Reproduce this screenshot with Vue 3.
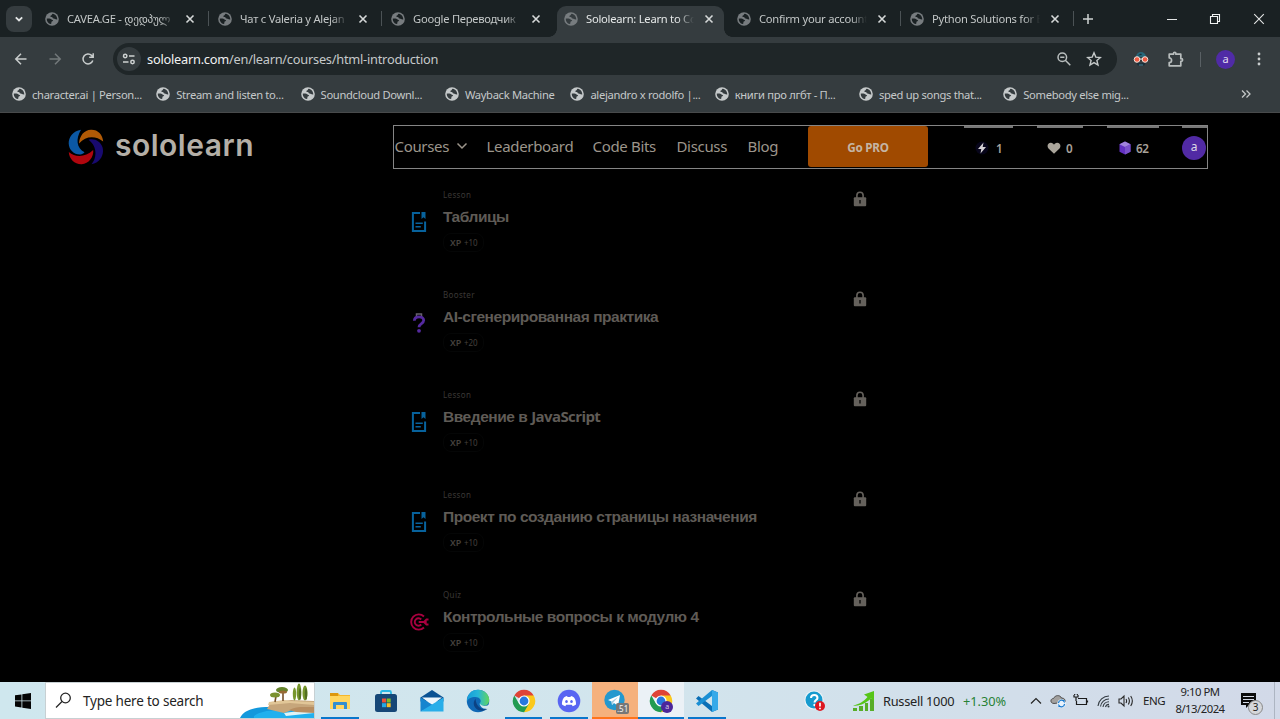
<script setup>
const tabs = [
  { title: 'CAVEA.GE - დედპულ' },
  { title: 'Чат с Valeria y Alejan' },
  { title: 'Google Переводчик' },
  { title: 'Sololearn: Learn to Co', active: true },
  { title: 'Confirm your account' },
  { title: 'Python Solutions for B' }
]

const bookmarks = [
  { title: 'character.ai | Person...' },
  { title: 'Stream and listen to...' },
  { title: 'Soundcloud Downl...' },
  { title: 'Wayback Machine', short: true },
  { title: 'alejandro x rodolfo |...' },
  { title: 'книги про лгбт - П...' },
  { title: 'sped up songs that...' },
  { title: 'Somebody else mig...' }
]

const links = ['Leaderboard', 'Code Bits', 'Discuss', 'Blog']

const lessons = [
  { kind: 'Lesson', title: 'Таблицы', xp: '+10' },
  { kind: 'Booster', title: 'AI-сгенерированная практика', xp: '+20' },
  { kind: 'Lesson', title: 'Введение в ', latin: 'JavaScript', xp: '+10' },
  { kind: 'Lesson', title: 'Проект по созданию страницы назначения', xp: '+10' },
  { kind: 'Quiz', title: 'Контрольные вопросы к модулю 4', xp: '+10' }
]
</script>

<template>
  <div class="screen">
    <svg class="defs" width="0" height="0">
      <symbol id="globe" viewBox="0 0 14 14">
        <circle cx="7" cy="7" r="6.8" fill="currentColor" />
        <path d="M7.8 1.700c-1.300.2-.4 1.400-1.700 1.700-1.300.2-.7 1.600.6 1.700 1.300 0 .5 1.400 1.900 1.500 1.500 0 1.200 1 3.700.9C12.300 4.600 10.500 2 7.800 1.700zM1.700 6.700c1.500-.3 4-.3 4.800.7.500.700 1.500.400 1.600 1.200.1.900-1.600.700-1.700 1.600-.1.900.2 1.500-.9 1.900C3.400 11.500 1.700 9.600 1.700 6.700z" fill="var(--hole)" />
      </symbol>
    </svg>

    <header class="browser">
      <div class="tabstrip">
        <button class="tabsearch">
          <svg width="10" height="10" viewBox="0 0 10 10"><path d="M1.800 3.300l3.200 3.200 3.200-3.200" fill="none" stroke="#e2e5e5" stroke-width="1.800" /></svg>
        </button>
        <div v-for="tab in tabs" :key="tab.title" class="tab" :class="{ active: tab.active }">
          <svg class="tabicon" width="14" height="14"><use href="#globe" /></svg>
          <span class="tabtitle">{{ tab.title }}</span>
          <svg class="close" width="10" height="10" viewBox="0 0 10 10"><path d="M1.500 1.500l7 7m0-7l-7 7" stroke="currentColor" stroke-width="1.600" /></svg>
        </div>
        <svg class="plus" width="12" height="12" viewBox="0 0 12 12"><path d="M6 1v10M1 6h10" stroke="#cfd3d3" stroke-width="1.500" /></svg>
        <div class="windowbuttons">
          <svg width="12" height="12" viewBox="0 0 12 12"><path d="M1 6.500h10" stroke="#e4e6e6" /></svg>
          <svg width="12" height="12" viewBox="0 0 12 12"><path d="M1.500 3.500h7v7h-7zM3.500 3.500v-2h7v7h-2" fill="none" stroke="#f0f2f2" stroke-width="1.100" /></svg>
          <svg width="12" height="12" viewBox="0 0 12 12"><path d="M1.200 1.200l9.600 9.600m0-9.600l-9.600 9.600" stroke="#e4e6e6" stroke-width="1.100" /></svg>
        </div>
      </div>

      <div class="toolbar">
        <svg class="navicon" width="14" height="14" viewBox="0 0 14 14"><path d="M12.500 7H2M7 1.800L1.800 7 7 12.200" fill="none" stroke="#c9cdcd" stroke-width="1.500" /></svg>
        <svg class="navicon" width="14" height="14" viewBox="0 0 14 14"><path d="M1.500 7H12M7 1.800L12.200 7 7 12.200" fill="none" stroke="#73797b" stroke-width="1.500" /></svg>
        <svg class="navicon" width="14" height="14" viewBox="0 0 14 14"><path d="M11.800 8.500A5 5 0 1 1 10.600 3.400L12 4.900M12.200 1.200v4H8.200" fill="none" stroke="#c9cdcd" stroke-width="1.500" /></svg>
        <div class="omnibox">
          <span class="site">
            <svg width="14" height="14" viewBox="0 0 14 14" fill="none" stroke="#ced2d2" stroke-width="1.500"><circle cx="3.200" cy="4" r="1.700" /><path d="M7 4h5.500M1 10h5.500" /><circle cx="10.500" cy="10" r="1.700" /></svg>
          </span>
          <span class="url"><b>sololearn.com</b>/en/learn/courses/html-introduction</span>
          <svg class="zoomicon" width="14" height="14" viewBox="0 0 14 14"><g fill="none" stroke="#b9bebe" stroke-width="1.500"><circle cx="5.300" cy="5.300" r="4.300" /><path d="M8.300 8.300l5 5M3.200 5.300h4.200" /></g></svg>
          <svg width="16" height="16" viewBox="0 0 16 16"><path d="M8 1.800l1.800 4.300 4.600.4-3.500 3 1.100 4.600L8 11.600l-4 2.500 1.100-4.600-3.500-3 4.600-.4z" fill="none" stroke="#c5c9c9" stroke-width="1.400" /></svg>
        </div>
        <svg class="mask" width="16" height="16" viewBox="0 0 16 16"><path d="M3 6a5 5 0 0 1 10 0z" fill="#27687a" /><path d="M4.500 4.500L8 2.500l1 1.500z" fill="#182f3a" /><circle cx="4" cy="8.500" r="2.800" fill="#f05b42" stroke="#f4e4de" stroke-width="1" /><circle cx="12" cy="8.500" r="2.800" fill="#f05b42" stroke="#f4e4de" stroke-width="1" /><path d="M6 8h4" stroke="#f4e4de" /><path d="M3.500 12.500c1.500-1.200 3-.5 4.500 0 1.500-.5 3-1.200 4.500 0l-1.300 2H4.800z" fill="#182f3a" /><path d="M6 14h4" stroke="#477c90" /></svg>
        <svg class="puzzle" width="17" height="17" viewBox="0 0 17 17"><path d="M2.200 3.200h4.300v-.7a1.200 1.200 0 0 1 2.400 0v.7h4.900v4.500h.5a1.300 1.300 0 0 1 0 2.600h-.5v4.500H2.200v-3.300a2.300 2.300 0 0 0 0-4.700z" fill="none" stroke="#b8bdbd" stroke-width="1.700" stroke-linejoin="round" /></svg>
        <span class="sep"></span>
        <span class="profile">a</span>
        <svg class="dots" width="4" height="16" viewBox="0 0 4 16" fill="#c9cdcd"><circle cx="2" cy="3" r="1.400" /><circle cx="2" cy="8" r="1.400" /><circle cx="2" cy="13" r="1.400" /></svg>
      </div>

      <div class="bookmarks">
        <div v-for="mark in bookmarks" :key="mark.title" class="mark" :class="{ short: mark.short }">
          <svg width="14" height="14"><use href="#globe" /></svg>
          <span>{{ mark.title }}</span>
        </div>
        <svg class="more" width="10" height="10" viewBox="0 0 10 10"><path d="M1 1.500L4.500 5 1 8.500M5.500 1.500L9 5 5.500 8.500" fill="none" stroke="#c3c7c7" stroke-width="1.300" /></svg>
      </div>
    </header>

    <main class="page">
      <div class="siteheader">
        <div class="brand">
          <svg width="36" height="36" viewBox="0 0 36 36">
            <path d="M13 .8C5 2 .5 8.500.7 14.500 1 21 6 25.800 12.500 25.500c1.400-.2 2.800-.8 4-2.200C8.500 19 7.500 10 13 .8z" fill="#0b58a4" />
            <path d="M11 14.500C11.500 7 16 1 23 .8 30 .6 34.500 5.500 35.200 12.500 28 6.800 18 6.300 11 14.500z" fill="#b15a06" />
            <path d="M20.500 10.800c6-1.800 12 1.500 14 7.500 2 7-2 15-11 16.900 5.500-6 6-18-3-24.400z" fill="#180a70" />
            <path d="M.8 23C7.500 28.500 17 28.500 25.200 21c.9 7-4.700 13.800-11.400 14.200C6.800 35.500 1 30 .8 23z" fill="#b0060e" />
          </svg>
          <span class="wordmark">sololearn</span>
        </div>
        <nav class="nav">
          <a class="courses">Courses <svg width="12" height="8" viewBox="0 0 12 8"><path d="M1.500 1.500L6 6l4.500-4.500" fill="none" stroke="#9c958b" stroke-width="1.500" /></svg></a>
          <a v-for="link in links" :key="link" :class="link.toLowerCase().replace(' ', '-')">{{ link }}</a>
          <button class="pro">Go PRO</button>
          <div class="stat bolt">
            <svg width="14" height="14" viewBox="0 0 14 14"><circle cx="7" cy="7" r="6.500" fill="#07051a" /><path d="M8.500 1.500L3 8h3.300L5.500 12.500 11 6H7.700z" fill="#d4d0d4" /></svg><span>1</span>
          </div>
          <div class="stat heart">
            <svg width="14" height="12" viewBox="0 0 14 12"><path d="M7 11.800L1.500 6.500C-.4 4.400.7.700 3.900.7 5.500.7 6.500 1.700 7 2.700 7.500 1.700 8.500.7 10.100.7c3.200 0 4.300 3.700 2.400 5.800z" fill="#aaa59b" /></svg><span>0</span>
          </div>
          <div class="stat cube">
            <svg width="14" height="14" viewBox="0 0 14 14"><path d="M7 .5l5.500 2.700v7.600L7 13.500l-5.500-2.700V3.200z" fill="#6230c0" /><path d="M1.500 3.200L7 .5l5.500 2.700L7 5.900z" fill="#a183db" /><path d="M7 5.900l5.500-2.700v7.600L7 13.500z" fill="#7a51ca" /></svg><span>62</span>
          </div>
          <div class="account"><span>a</span></div>
        </nav>
      </div>

      <section class="lessons">
        <article v-for="lesson in lessons" :key="lesson.title" class="lesson">
          <div class="lessonicon" :class="lesson.kind.toLowerCase()">
            <svg v-if="lesson.kind === 'Lesson'" width="16" height="22" viewBox="0 0 16 22"><path d="M9 1.900H1.900v18.200h12.200V10.500" fill="none" stroke="#07629c" stroke-width="2" /><path d="M10.500 1h4v7l-2-1.800-2 1.800z" fill="#07629c" /><path d="M4.500 12.300h7.300M4.500 15.800h5.300" stroke="#07629c" stroke-width="1.500" /></svg>
            <svg v-else-if="lesson.kind === 'Booster'" width="16" height="22" viewBox="0 0 16 22"><path d="M5.500 5V2h5v3" fill="none" stroke="#68626f" stroke-width="1.500" /><path d="M3.300 8.800c.2-5.300 9.400-5.100 9.400-.5 0 3.500-4.700 3-4.700 7" fill="none" stroke="#552a9f" stroke-width="2.800" /><circle cx="8" cy="18.800" r="1.900" fill="#552a9f" /></svg>
            <svg v-else width="20" height="20" viewBox="0 0 20 20"><g fill="none" stroke="#a9003f" stroke-width="1.900"><path d="M15 4.500a7.600 7.600 0 1 0 0 11" /><path d="M12.200 7.500a3.700 3.700 0 1 0 0 5M9.700 10h8M15 10l2.500-2.500h2M15 10l2.500 2.500h2" /></g></svg>
          </div>
          <div class="lessontext">
            <span class="kind">{{ lesson.kind }}</span>
            <h3>{{ lesson.title }}<span v-if="lesson.latin" class="latin">{{ lesson.latin }}</span></h3>
            <span class="xp"><b>XP</b><span>{{ lesson.xp }}</span></span>
          </div>
          <svg class="lock" width="14" height="16" viewBox="0 0 14 16"><path d="M3.900 7V4.300a3.100 3.100 0 0 1 6.200 0V7" fill="none" stroke="#65615c" stroke-width="1.600" /><rect x=".8" y="6.300" width="12.400" height="8.900" rx="1" fill="#65615c" /><path d="M7 9v3.500" stroke="#171615" stroke-width="1.600" /></svg>
        </article>
      </section>
    </main>

    <footer class="taskbar">
      <div class="start">
        <svg width="16" height="16" viewBox="0 0 16 16"><path d="M0 2.300L6.500 1.400v6.100H0zM7.300 1.300L16 0v7.500H7.300zM0 8.300h6.500v6.200L0 13.600zM7.300 8.300H16V16l-8.700-1.300z" fill="#050505" /></svg>
      </div>
      <div class="search">
        <svg class="lens" width="17" height="17" viewBox="0 0 17 17"><circle cx="10.500" cy="6" r="4.800" fill="none" stroke="#252525" stroke-width="1.300" /><path d="M7 9.500L1 15.500" stroke="#252525" stroke-width="1.300" /></svg>
        <span>Type here to search</span>
        <svg class="scene" width="74" height="36" viewBox="0 0 74 36">
          <path d="M0 36c4-8 14-11 30-11h44v11z" fill="#1398dc" /><path d="M14 34c8-6 20-6 32-5l28 2v5H14z" fill="#20b0ee" /><path d="M44 31l30-4v4l-28 3z" fill="#dff4f6" />
          <path d="M27 27l4-7 12-1 8-1 23 1v10l-14 1-8-2-8 3z" fill="#c6a67b" /><path d="M29 20l15-2 8 1 22 1v3l-24-2-22 2z" fill="#e1c697" /><path d="M49 28c7-4 15-3 25-3v6l-18-1z" fill="#b78e62" />
          <path d="M35 20l1-6M43 19V9" stroke="#76502b" stroke-width="1.600" /><ellipse cx="35" cy="13" rx="5" ry="2.500" fill="#7b9130" /><ellipse cx="42" cy="8" rx="6" ry="3" fill="#63832b" /><ellipse cx="43" cy="10" rx="4" ry="1.500" fill="#986b35" />
          <g fill="#77972d"><ellipse cx="54.500" cy="12" rx="1.700" ry="6.500" /><ellipse cx="59" cy="10" rx="2.300" ry="8.500" /><ellipse cx="65" cy="11" rx="2.500" ry="7.500" /></g><g fill="#526f21"><ellipse cx="60" cy="12" rx="1.200" ry="6" /><ellipse cx="66" cy="12" rx="1.200" ry="6" /></g>
        </svg>
      </div>
      <div class="apps">
        <div class="app running explorer">
          <svg width="22" height="22" viewBox="0 0 22 22"><path d="M1 3h8l2 2h10v13H1z" fill="#f5b72d" /><path d="M1 3h8v3H1z" fill="#dc970d" /><path d="M1 6h20v13H1z" fill="#ffd65f" /><path d="M4 19v-6q0-1 1-1h12q1 0 1 1v6h-3v-4H7v4z" fill="#318fcf" /></svg>
        </div>
        <div class="app">
          <svg width="24" height="24" viewBox="0 0 24 24"><path d="M7 8V3.500Q7 2 8.500 2h7Q17 2 17 3.500V8" fill="none" stroke="#29b8e6" stroke-width="1.800" /><rect x="1" y="5" width="22" height="18" rx="2.500" fill="#164777" /><path d="M8 9.500h4v4H8z" fill="#ef5138" /><path d="M12.700 9.500h4v4h-4z" fill="#7fbe27" /><path d="M8 14.200h4v4H8z" fill="#25a9e5" /><path d="M12.700 14.200h4v4h-4z" fill="#f9be25" /></svg>
        </div>
        <div class="app">
          <svg width="24" height="24" viewBox="0 0 24 24"><path d="M.5 8.500L12 1l11.500 7.500v4H.5z" fill="#0a5293" /><path d="M2 8.500h20L12 16z" fill="#edf6fc" /><path d="M.5 8.500l14 8.500L.5 22.500z" fill="#1685cf" /><path d="M23.500 8.500v14H.5z" fill="#28aee9" /></svg>
        </div>
        <div class="app">
          <svg width="24" height="24" viewBox="0 0 24 24"><defs><linearGradient id="edge"><stop stop-color="#159dda" /><stop offset=".5" stop-color="#27b5d8" /><stop offset="1" stop-color="#62d65c" /></linearGradient></defs><circle cx="12" cy="12" r="11.200" fill="#1068b5" /><path d="M1 10C2.500 4 6.500.8 12 .8c7 0 11.200 5.500 11.200 10 0 5-4 7-8 5.600-1.700-.6-2-1.400-1.200-2.500 2.200-3-1-6-4.500-6C5 8 1.500 9.500 1 13z" fill="url(#edge)" /><path d="M9.500 9.700c-3.500 4.300-1.500 9.500 3.500 11.600 3.500 1.100 6.500.2 8.700-1.500-4 1.400-11.400-.4-12.200-10.100z" fill="#0c4283" /><path d="M13.500 14.500c2.400 3 7 3.200 10.500.5v2.500l-2 2c-3.800 1.200-7.500-.5-8.500-5z" fill="#d4e7ee" /></svg>
        </div>
        <div class="app running">
          <svg width="24" height="24" viewBox="0 0 24 24"><path d="M12 12L2.300 6.400A11.200 11.200 0 0 1 21.700 6.400z" fill="#df4437" /><path d="M12 12V6.400h9.700A11.200 11.200 0 0 1 12 23.200z" fill="#fbc91c" /><path d="M2.300 6.400L7.200 14.900l9.700-.1L12 23.200A11.200 11.200 0 0 1 2.300 6.400z" fill="#229b51" /><circle cx="12" cy="12" r="5.600" fill="#fff" /><circle cx="12" cy="12" r="4.400" fill="#2878de" /></svg>
        </div>
        <div class="app running">
          <svg width="24" height="24" viewBox="0 0 24 24"><circle cx="12" cy="12" r="11.300" fill="#5865f2" /><path d="M8.500 7.500L10 7l.6 1.100h2.800L14 7l1.500.5c2.200.8 3.800 4.500 3.500 8-1.100.9-2.100 1.400-3.300 1.700l-.9-1.500H9.200l-.9 1.500c-1.200-.3-2.200-.8-3.300-1.700-.3-3.500 1.300-7.200 3.500-8z" fill="#fff" /><ellipse cx="9.500" cy="12.500" rx="1.300" ry="1.500" fill="#5865f2" /><ellipse cx="14.500" cy="12.500" rx="1.300" ry="1.500" fill="#5865f2" /></svg>
        </div>
        <div class="app telegram">
          <svg width="24" height="24" viewBox="0 0 24 24"><circle cx="11.500" cy="11" r="10.200" fill="#2498ce" /><path d="M5 11l12-5-2 11-4-3-2 2-.5-3.500z" fill="#fff" /><path d="M8.500 12.500L15 8l-4.700 5.500L9 16z" fill="#a8cce0" /></svg>
          <span class="badge">.51</span>
        </div>
        <div class="app running current">
          <svg width="24" height="24" viewBox="0 0 24 24"><path d="M12 12L2.300 6.400A11.200 11.200 0 0 1 21.700 6.400z" fill="#df4437" /><path d="M12 12V6.400h9.700A11.200 11.200 0 0 1 12 23.200z" fill="#fbc91c" /><path d="M2.300 6.400L7.200 14.900l9.700-.1L12 23.200A11.200 11.200 0 0 1 2.300 6.400z" fill="#229b51" /><circle cx="12" cy="12" r="5.600" fill="#fff" /><circle cx="12" cy="12" r="4.400" fill="#2878de" /></svg>
          <span class="profilebadge">a</span>
        </div>
        <div class="app running">
          <svg width="24" height="24" viewBox="0 0 24 24"><path d="M17 1l6 2.500v17L17 23 1 9.500 3.500 7 17 17z" fill="#0b6fb6" /><path d="M17 1L1 14.500 3.500 17 17 7z" fill="#198fd4" /><path d="M17 1l6 2.500v17L17 23z" fill="#36a9e9" /></svg>
        </div>
      </div>
      <div class="tray">
        <svg class="help" width="22" height="22" viewBox="0 0 22 22"><circle cx="10" cy="10" r="9.600" fill="#eef5f8" /><circle cx="10" cy="10" r="8.500" fill="#169bcf" /><path d="M7 8c0-4 6.500-4 6.500 0 0 2-3 2.200-3 4.500" fill="none" stroke="#fff" stroke-width="2" /><circle cx="10.500" cy="15" r="1.200" fill="#fff" /><circle cx="16" cy="16" r="5" fill="#dd1821" /><path d="M16 12.800v3.700m0 1.200v1.500" stroke="#fff" stroke-width="1.700" /></svg>
        <svg class="chart" width="23" height="22" viewBox="0 0 23 22"><path d="M1 21v-3h4v3zM7 21v-5h4v5zM13 21v-8h3v8zM18 21V9h4v12z" fill="#57ad28" /><path d="M1 15.500c6-1 11-4.500 14.500-8.500L12 4.500 22 1v10l-3-2.500C14 13 8 16.500 1 15.500z" fill="#56c518" /></svg>
        <span class="stock">Russell 1000</span><span class="gain">+1.30%</span>
        <svg class="caret" width="12" height="8" viewBox="0 0 12 8"><path d="M1 6.500l5-5 5 5" fill="none" stroke="#252525" stroke-width="1.200" /></svg>
        <svg class="cloud" width="16" height="14" viewBox="0 0 16 14"><path d="M4 9.500C0 9.500 0 4.500 3.500 4.500 5 1 10 .5 11.500 4c3 0 4 2 3.500 4z" fill="#a2a09e" stroke="#4f4e4f" /><circle cx="11.500" cy="9.500" r="4.300" fill="#e8f2fc" /><path d="M8.500 9a3 3 0 0 1 5.500-1.500V6M14.500 10A3 3 0 0 1 9 11.500V13" fill="none" stroke="#1377cd" stroke-width="1.200" /></svg>
        <svg class="battery" width="16" height="14" viewBox="0 0 16 14"><path d="M5 4.500h8.500v6H3.500V7M14.500 6.500v2M1 1v2h4V1M3 3v4M1.700 0v1M4.300 0v1" fill="none" stroke="#1c1c1c" stroke-width="1.200" /></svg>
        <svg class="wifi" width="14" height="14" viewBox="0 0 14 14"><g fill="none" stroke="#333b42" stroke-width="1.100"><path d="M1 12A11 11 0 0 1 12 2M3.500 12.500A8.500 8.500 0 0 1 12 5M6 13a6 6 0 0 1 6-5.200M8.500 13a3.500 3.500 0 0 1 3.500-2.600" /></g><circle cx="11.500" cy="12.500" r="1" fill="#333b42" /></svg>
        <svg class="speaker" width="16" height="14" viewBox="0 0 16 14"><g fill="none" stroke="#292929" stroke-width="1.100"><path d="M1 5h2l3-3v10L3 9H1zM8 5q1.200 2 0 4M10.300 3.500q2.200 3.500 0 7M12.700 2q3.300 5 0 10" /></g></svg>
        <span class="language">ENG</span>
        <div class="clock"><span>9:10 PM</span><span>8/13/2024</span></div>
        <div class="notice"><svg width="15" height="16" viewBox="0 0 15 16"><path d="M0 0h15v12H8l-3 3v-3H0z" fill="#0b0b0b" /><path d="M2 3.500h11M2 6.500h11M2 9.500h6" stroke="#d5dae6" stroke-width="1.100" /></svg><span>3</span></div>
        <span class="peek"></span>
      </div>
    </footer>
  </div>
</template>

<style>
body { overflow: hidden; background: #000; }
</style>

<style scoped>
* { box-sizing: border-box; }
svg { display: block; flex-shrink: 0; }
button { border: 0; padding: 0; }
.screen { width: 1280px; height: 719px; display: flex; flex-direction: column; overflow: hidden; background: #000; font-family: "Noto Sans", "DejaVu Sans", sans-serif; }
.defs { height: 0; }
.browser { height: 113px; flex-shrink: 0; background: #353c3f; border-bottom: 1px solid #484a4b; white-space: nowrap; }
.tabstrip { height: 38px; display: flex; align-items: center; background: linear-gradient(#1a2123 0 37px, #353c3f 37px); }
.tabsearch { width: 26px; height: 26px; margin: 0 8.500px 0 5.500px; display: grid; place-items: center; background: #353c3f; border-radius: 8px; }
.tab { --hole: #1a2123; position: relative; width: 173px; flex-shrink: 0; height: 38px; padding-left: 5px; display: flex; align-items: center; color: #c3c7c7; }
.tab:not(.active)::after { content: ""; position: absolute; left: 167.500px; top: 11px; width: 1px; height: 15px; background: #4b5255; }
.tab:nth-child(4)::after { display: none; }
.tabicon { color: #777c7f; }
.tabtitle { width: 108px; margin-left: 8px; font-size: 11.200px; line-height: 20px; letter-spacing: -.25px; mask-image: linear-gradient(90deg, #000 85%, transparent); }
.close { margin-left: 10px; color: #d5d8d8; }
.tab.active { --hole: #353c3f; z-index: 1; color: #e5e8e8; }
.tab.active::before { content: ""; position: absolute; z-index: -1; left: -2px; top: 6px; width: 167px; height: 32px; background: #353c3f; border-radius: 9px 9px 0 0; }
.tab.active::after { content: ""; position: absolute; z-index: -1; left: -10px; top: 29px; width: 183px; height: 8px; background: radial-gradient(circle at 0 0, transparent 7.500px, #353c3f 8px) left / 8px 8px no-repeat, radial-gradient(circle at 100% 0, transparent 7.500px, #353c3f 8px) right / 8px 8px no-repeat; }
.plus { margin-left: 4px; }
.windowbuttons { margin-left: auto; padding-right: 15.500px; display: flex; gap: 31.500px; }
.toolbar { height: 42px; display: flex; align-items: center; background: #353c3f; padding-left: 14px; }
.navicon { margin-right: 20px; }
.navicon:nth-child(2) { margin-right: 19px; }
.navicon:nth-child(3) { margin-right: 18px; }
.omnibox { width: 1004px; height: 32px; padding: 0 15px 0 4px; border-radius: 16px; display: flex; align-items: center; background: #1f2628; }
.site { width: 24px; height: 24px; border-radius: 50%; display: grid; place-items: center; background: #353c3f; }
.url { margin-left: 6px; font-size: 12.800px; letter-spacing: -.24px; color: #c5c9ca; }
.url b { color: #f0f2f2; font-weight: 400; }
.zoomicon { margin: 0 15px 0 auto; }
.mask { margin-left: 16px; }
.puzzle { margin-left: 18px; }
.sep { width: 1px; height: 15px; background: #596064; margin-left: 16px; }
.profile { width: 19px; height: 19px; margin-left: 15px; border-radius: 50%; background: #502ba6; color: #e2dcef; font-size: 11px; line-height: 17px; text-align: center; }
.dots { margin-left: 22px; }
.bookmarks { --hole: #353c3f; height: 28px; padding-left: 12px; display: flex; align-items: center; background: #353c3f; }
.mark { width: 144.300px; display: flex; align-items: center; gap: 6px; color: #c5c9ca; font-size: 11.200px; letter-spacing: -.32px; }
.mark.short { width: 125.500px; }
.more { margin-left: 93px; }
.page { height: 569px; flex-shrink: 0; background: #000; }
.siteheader { height: 69px; padding: 12px 72px 0 68px; display: flex; }
.brand { width: 325px; flex-shrink: 0; height: 43px; display: flex; align-items: center; gap: 11px; }
.wordmark { font-family: Inter, sans-serif; font-weight: 600; font-size: 30px; line-height: 36px; letter-spacing: .5px; color: #b4afa7; margin-top: -3px; }
.nav { width: 815px; height: 43.500px; border: 1px solid #858585; display: flex; align-items: center; font-size: 15px; color: #9c958b; white-space: nowrap; }
.courses { width: 92px; display: flex; align-items: center; gap: 7px; }
.leaderboard { width: 106px; }
.code-bits { width: 84px; }
.discuss { width: 71px; }
.blog { width: 61px; }
.nav a { letter-spacing: -.33px; line-height: 40px; margin-top: -1px; padding-left: .5px; }
.pro { width: 120px; height: 41px; background: #a04a00; border-radius: 3px; color: #c5b5a4; font-family: "Noto Sans", sans-serif; font-weight: 700; font-size: 11.700px; letter-spacing: -.25px; }
.stat { height: 41px; display: flex; align-items: center; border-top: 2px solid #777; font-size: 11.700px; color: #a8a29a; font-weight: 600; }
.bolt { width: 49px; margin-left: 36px; padding-left: 11px; gap: 7px; }
.heart { width: 46px; margin-left: 24px; padding-left: 10px; gap: 5px; }
.cube { width: 52px; margin-left: 24px; padding-left: 11px; gap: 4px; letter-spacing: -.4px; }
.account { width: 25px; height: 41px; margin-left: 23px; border-top: 2px solid #777; display: flex; align-items: center; }
.account span { width: 24px; height: 24px; border-radius: 50%; background: #512aa4; color: #ddd9e5; font-size: 12px; line-height: 22px; text-align: center; }
.lessons { width: 460px; margin-left: 409px; }
.lesson { height: 100.100px; display: flex; align-items: flex-start; }
.lessonicon { width: 20px; margin-right: 14px; height: 52px; padding-top: 29px; display: flex; justify-content: center; }
.booster { padding-top: 30px; }
.quiz { padding-top: 30px; }
.lessontext { width: 410px; display: flex; flex-direction: column; align-items: flex-start; padding-top: 7px; }
.kind { font-size: 8px; line-height: 12px; letter-spacing: .35px; color: #3b3836; }
h3 { margin: 5px 0 0; font: 700 15.500px/22px "Liberation Sans", Arial, sans-serif; letter-spacing: -.46px; color: #5f5b56; white-space: nowrap; }
.latin { font-family: "Open Sans", sans-serif; font-size: 15px; line-height: 20px; font-weight: 700; letter-spacing: -.6px; }
.xp { margin-top: 5px; width: 41px; height: 19px; padding-left: 6px; display: flex; gap: 3px; border: 1px solid #050606; border-radius: 8px; font-size: 8px; line-height: 17px; letter-spacing: -.1px; color: #45413d; white-space: nowrap; }
.xp b { font-size: 9px; font-weight: 600; }
.lock { margin-top: 9px; }
.taskbar { height: 37px; display: flex; background: linear-gradient(90deg, #cfe7ee, #d2e5ed 50%, #d2d9e8); color: #232323; white-space: nowrap; }
.start { width: 45px; display: flex; align-items: center; justify-content: center; }
.search { position: relative; width: 270px; display: flex; align-items: center; background: #fff; border: 1px solid #c7d0d3; font-size: 13.500px; letter-spacing: -.2px; }
.lens { margin: 0 11px 0 9px; }
.scene { position: absolute; right: 0; bottom: 0; }
.apps { margin-left: 2px; display: flex; }
.app { width: 45.900px; height: 37px; display: flex; align-items: center; justify-content: center; position: relative; }
.running::after { content: ""; position: absolute; bottom: 0; left: 4px; width: 37.500px; height: 2px; background: #0a77cc; }
.telegram { background: #f5b17d; border-bottom: 2px solid #ff741b; padding-top: 2px; }
.badge { position: absolute; right: 9px; bottom: 3px; height: 11px; padding: 0 1px; background: #777; border-radius: 2px; font-size: 8px; line-height: 11px; color: #f5f5f5; }
.current { background: #ebf1f6; }
.current::after { left: 0; width: 100%; }
.profilebadge { position: absolute; right: 11px; bottom: 6px; width: 12px; height: 12px; border-radius: 50%; background: #4c269a; color: #d7cce9; font-size: 7px; line-height: 11px; text-align: center; }
.tray { width: 550px; display: flex; align-items: center; font-size: 12.800px; letter-spacing: -.28px; }
.help { margin-left: 74px; }
.chart { margin-left: 26px; }
.stock { margin-left: 8px; width: 80px; }
.gain { width: 44px; color: #278235; letter-spacing: -.05px; }
.caret { margin-left: 23px; }
.cloud { margin-left: 8px; }
.battery { margin-left: 7px; }
.wifi { margin-left: 8px; }
.speaker { margin-left: 7px; }
.language { margin-left: 9px; width: 23px; font-size: 11.500px; letter-spacing: -.5px; }
.clock { width: 58px; margin-left: 5px; display: flex; flex-direction: column; align-items: center; font-size: 11.300px; line-height: 16.500px; letter-spacing: -.5px; }
.notice { position: relative; margin-left: 12px; }
.notice span { position: absolute; left: 7px; top: 7px; width: 15px; height: 15px; border: 1px solid #888; background: #d5d7da; border-radius: 50%; font-size: 10px; line-height: 13px; text-align: center; }
.peek { width: 1px; height: 37px; margin-left: 18px; background: #adb5c2; }
</style>
